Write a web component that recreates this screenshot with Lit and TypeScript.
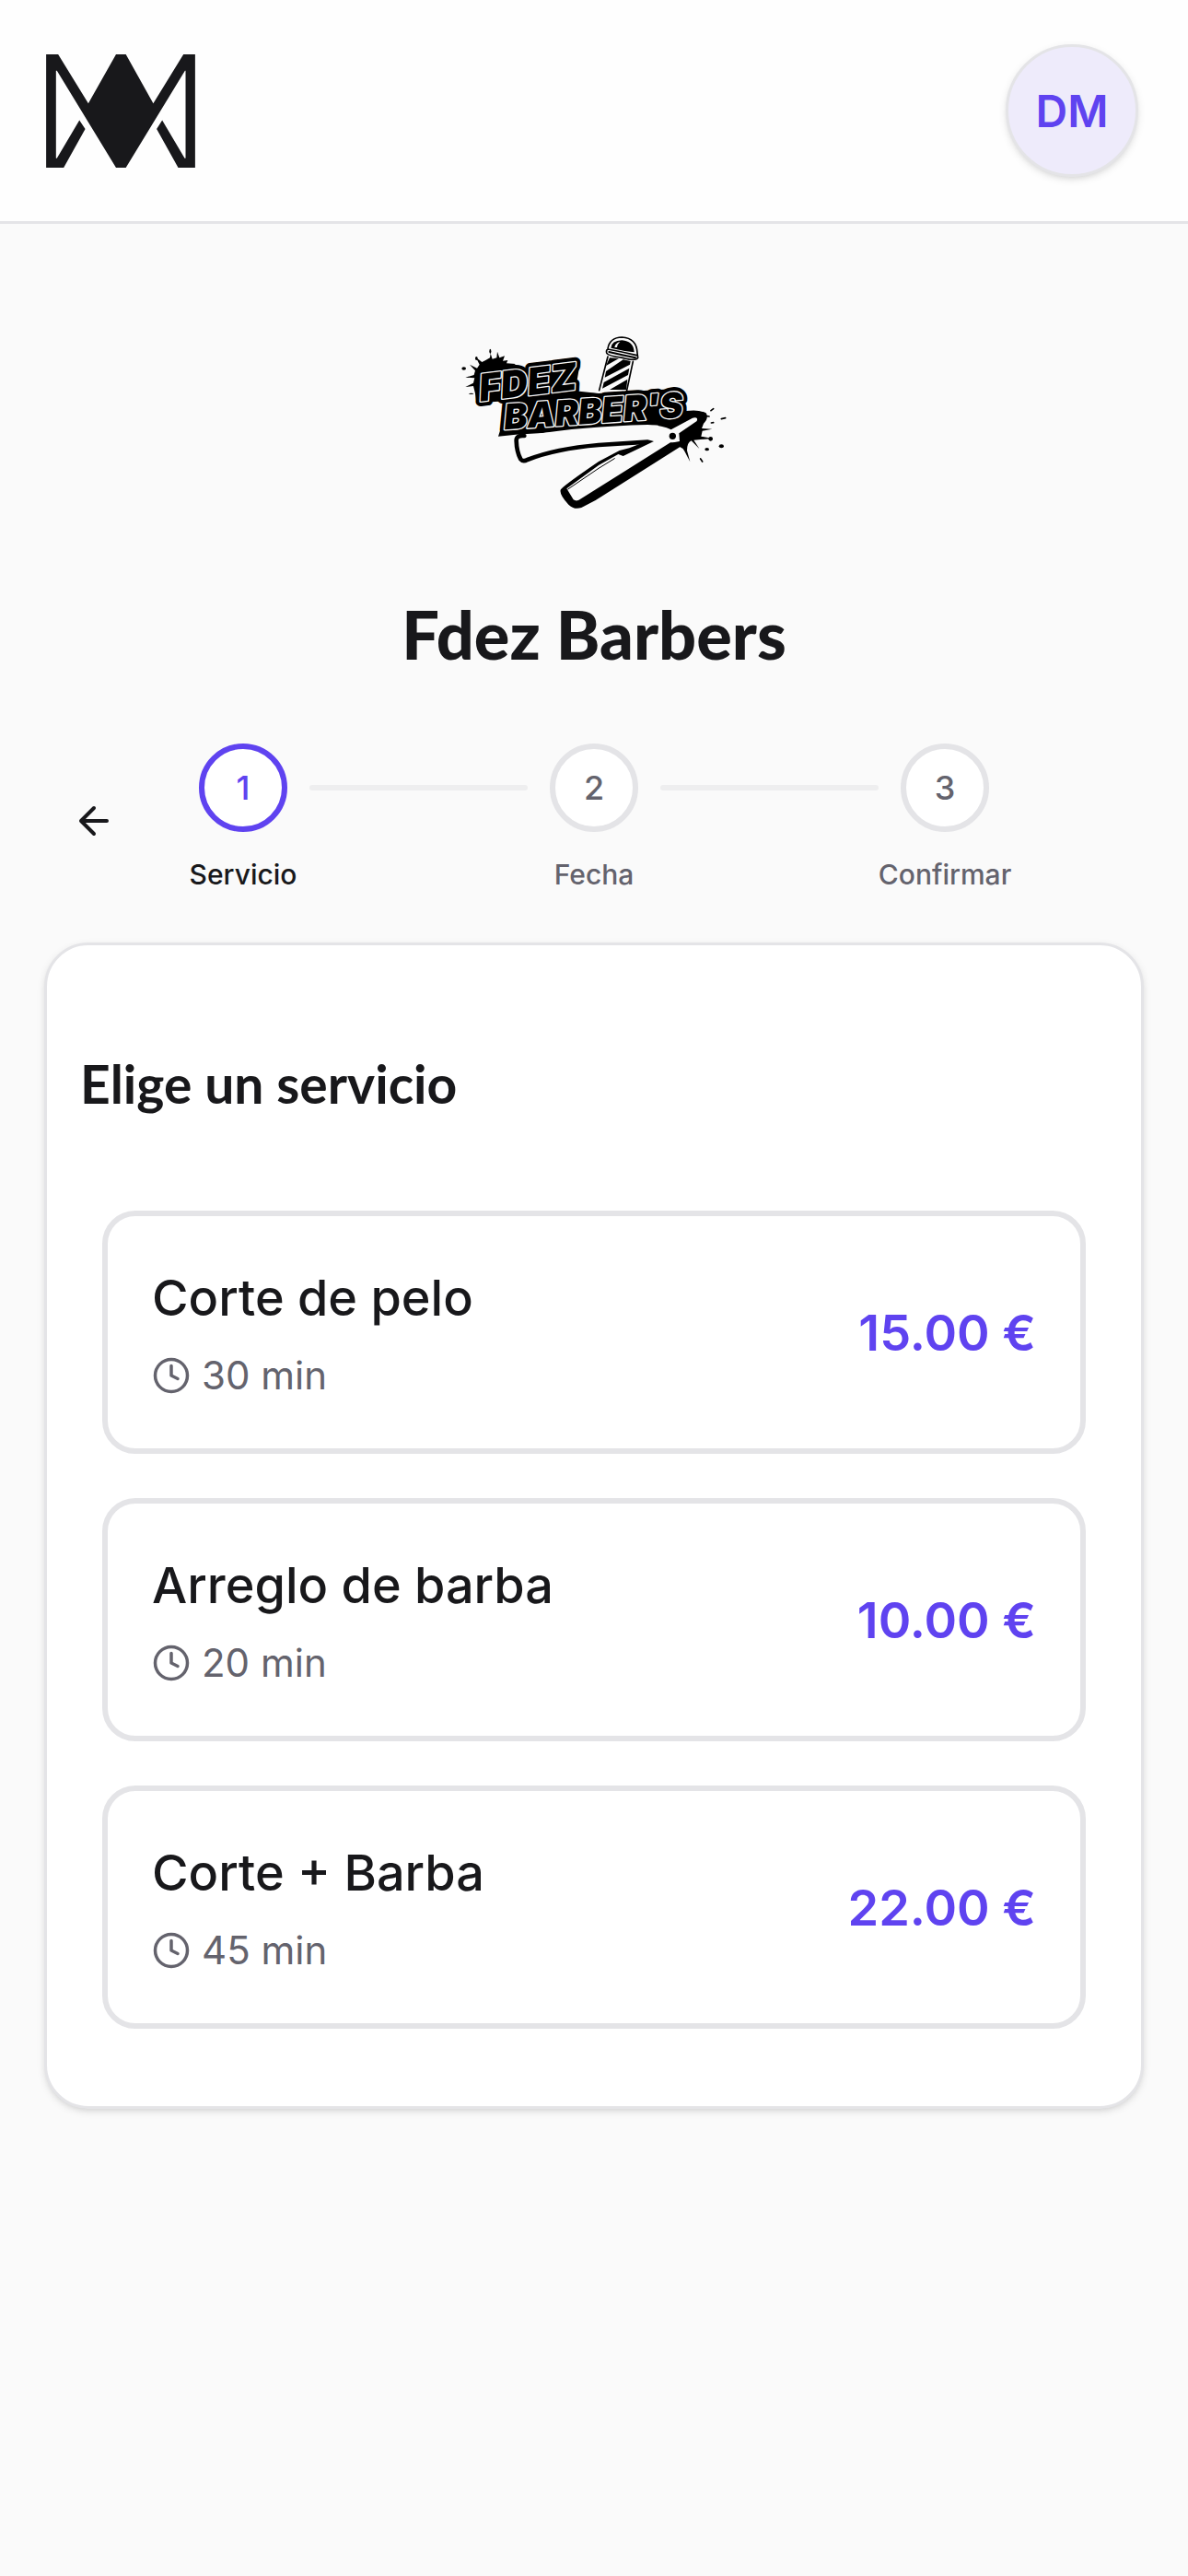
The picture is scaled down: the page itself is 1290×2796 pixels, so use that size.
import { LitElement, html, svg, css } from 'lit';
import { customElement, property, state } from 'lit/decorators.js';
import { classMap } from 'lit/directives/class-map.js';

interface Service {
  name: string;
  minutes: number;
  price: number;
}

const SERVICES: Service[] = [
  { name: 'Corte de pelo', minutes: 30, price: 15 },
  { name: 'Arreglo de barba', minutes: 20, price: 10 },
  { name: 'Corte + Barba', minutes: 45, price: 22 },
];

const STEPS = ['Servicio', 'Fecha', 'Confirmar'];

@customElement('brand-mark')
class BrandMark extends LitElement {
  static styles = css`
    :host {
      display: block;
    }

    .mark {
      display: block;
      width: 162px;
      height: 123px;
      fill: #18181b;
    }
  `;

  render() {
    return html`
      <svg class="mark" viewBox="62 55 484 368" aria-hidden="true">
        <path
          fill-rule="evenodd"
          d="M62 55H101L199 214L289 55H321L410 214L508 55H546V423H491L421 297L439 269L512 392H515V108H513L321 423H289L97 108H94V392H97L170 269L189 297L119 423H62Z"
        />
      </svg>
    `;
  }
}

@customElement('shop-logo')
class ShopLogo extends LitElement {
  static styles = css`
    :host {
      display: block;
    }

    .logo {
      display: block;
      width: 290px;
      height: 190px;
    }

    .line {
      fill: none;
      stroke: #000;
      stroke-linecap: round;
      stroke-linejoin: round;
    }

    .paper {
      fill: #fafafa;
    }

    .lettering {
      font-family: Inter, 'Liberation Sans', sans-serif;
      font-style: italic;
      font-weight: 900;
      stroke-linejoin: round;
    }

    .back {
      stroke: #000;
      stroke-width: 32px;
    }

    .front {
      fill: #000;
      stroke: #fafafa;
      stroke-width: 8px;
      paint-order: stroke;
    }
  `;

  private lettering(kind: string) {
    return svg`
      <g class="lettering ${kind}">
        <text x="95" y="258" font-size="122" transform="rotate(-7 95 258)">FDEZ</text>
        <text x="174" y="350" font-size="114" transform="rotate(-4 174 350)">BARBER'S</text>
      </g>
    `;
  }

  render() {
    return html`
      <svg class="logo" viewBox="30 40 870 570" role="img" aria-label="Fdez Barber's">
        <!-- ink splash, left -->
        <path
          d="M82 262L78 232L72 208L46 211L72 198L76 182L46 180L74 172L78 158L60 138L84 150L92 138L80 114L100 130L112 124L126 116L128 102L134 120L148 116L150 96L157 116L174 110L168 126L184 124L180 134L210 136L190 150L200 200Z"
        />
        <ellipse cx="41" cy="151" rx="7" ry="5" />
        <ellipse cx="127" cy="95" rx="3" ry="8" />
        <ellipse cx="65" cy="233" rx="8" ry="2" />
        <ellipse cx="82" cy="118" rx="4" ry="6" />

        <!-- barber pole -->
        <g transform="translate(450 0)">
          <path class="paper" d="M60 112L32 222H122L142 128Z" />
          <path class="line" stroke-width="5" d="M60 112L32 222M142 128L122 222" />
          <path
            d="M66 116L96 118L54 142ZM110 122L134 127L132 138L50 180L54 160ZM130 150L126 172L42 216L47 196ZM124 186L120 220H66Z"
          />
          <path class="paper" d="M56 86Q62 50 106 49Q154 52 158 92L160 110Q150 130 108 118Q60 112 54 102Z" />
          <path class="line" stroke-width="5" d="M60 86Q66 50 106 49Q154 52 156 100L158 116Q152 128 108 116Q60 110 56 100Q54 90 60 88Q104 96 154 108" />
          <path d="M70 84Q72 60 106 59Q144 62 146 98Q110 94 70 84Z" />
          <path class="line" stroke-width="6" d="M64 97Q110 108 150 116" />
          <path class="paper" d="M82 82Q84 68 100 64Q92 70 90 82Z" />
        </g>

        <!-- ink splash, right -->
        <g transform="translate(450 0)">
          <path
            d="M220 330L290 294Q350 280 380 296Q390 312 372 330L366 346L400 348L368 354L364 372L400 379L362 382L340 384L358 412L332 386Q318 392 318 418L328 455L310 420Q300 400 262 400Z"
          />
          <circle cx="395" cy="380" r="7" />
          <ellipse cx="383" cy="414" rx="7" ry="5" />
          <ellipse cx="430" cy="404" rx="8" ry="6" />
          <path class="line" stroke-width="5" d="M396 288L404 282M430 315L443 312M397 328L404 327M362 445L368 454M378 305L390 307" />
        </g>

        <!-- backing of the lettering -->
        <path d="M95 262L125 165L420 130L404 224L480 232L740 216L745 330L480 350L210 366L153 372L190 256Z" />
        ${this.lettering('back')}

        <!-- razor handle -->
        <path
          class="paper"
          d="M222 380Q232 370 270 366Q420 340 640 334Q690 336 716 350L786 312Q806 308 800 322L742 362L744 388L712 394L640 392Q400 398 242 452Q222 420 222 380Z"
        />
        <path class="line" stroke-width="14" d="M238 370Q211 368 212 386Q213 422 226 446Q234 456 248 448Q340 412 480 400L640 390" />
        <circle cx="721" cy="371" r="11" />

        <!-- razor blade -->
        <path class="paper" d="M640 392L712 394L742 380L450 574L405 600L366 548L480 462Z" />
        <path d="M714 392H768L470 580L424 604Q400 612 382 594Q352 562 356 546Q360 536 480 454L548 418L580 410L646 384L660 388L560 436L544 430L480 466L376 542L398 578Q410 586 424 574Z" />
        <path class="line" stroke-width="3" d="M380 544L480 476L532 444" />

        ${this.lettering('front')}
      </svg>
    `;
  }
}

@customElement('booking-steps')
class BookingSteps extends LitElement {
  static styles = css`
    :host {
      display: block;
    }

    .steps {
      display: flex;
      align-items: flex-start;
      gap: 24px;
      margin: 0;
      padding: 0 0 3px;
      list-style: none;
    }

    .step {
      display: flex;
      flex: none;
      flex-direction: column;
      align-items: center;
      gap: 24px;
      width: 96px;
      color: #64636d;
      font-weight: 500;
    }

    .circle {
      display: flex;
      align-items: center;
      justify-content: center;
      box-sizing: border-box;
      width: 96px;
      height: 96px;
      border: 6px solid #e4e4e7;
      border-radius: 50%;
      background: #fff;
      font-size: 36px;
    }

    .label {
      font-size: 30px;
      line-height: 45px;
      white-space: nowrap;
    }

    .current .circle {
      border-color: #5f43f0;
      color: #5f43f0;
    }

    .current .label {
      color: #18181b;
    }

    .connector {
      flex: 1;
      height: 6px;
      margin-top: 45px;
      border-radius: 3px;
      background: #eeeeef;
    }
  `;

  @property({ type: Number }) current = 0;

  render() {
    return html`
      <ol class="steps">
        ${STEPS.map(
          (label, i) => html`
            ${i > 0 ? html`<li class="connector" role="presentation"></li>` : ''}
            <li class=${classMap({ step: true, current: i === this.current })}>
              <span class="circle">${i + 1}</span>
              <span class="label">${label}</span>
            </li>
          `
        )}
      </ol>
    `;
  }
}

@customElement('service-option')
class ServiceOption extends LitElement {
  static styles = css`
    :host {
      display: block;
    }

    .option {
      display: flex;
      align-items: center;
      justify-content: space-between;
      gap: 48px;
      box-sizing: border-box;
      width: 100%;
      padding: 48px;
      border: 6px solid #e4e4e7;
      border-radius: 36px;
      background: #fff;
      color: #18181b;
      font: inherit;
      text-align: left;
      cursor: pointer;
    }

    .info {
      display: flex;
      flex-direction: column;
      gap: 12px;
    }

    .name {
      font-size: 54px;
      font-weight: 500;
      line-height: 81px;
    }

    .duration {
      display: flex;
      align-items: center;
      gap: 12px;
      color: #64636d;
      font-size: 42px;
      line-height: 63px;
    }

    .clock {
      width: 42px;
      height: 42px;
      fill: none;
      stroke: currentColor;
      stroke-width: 2px;
      stroke-linecap: round;
      stroke-linejoin: round;
    }

    .price {
      color: #5f43f0;
      font-size: 54px;
      font-weight: 600;
      white-space: nowrap;
    }
  `;

  @property({ attribute: false }) service!: Service;

  render() {
    const { name, minutes, price } = this.service;
    return html`
      <button class="option" type="button">
        <span class="info">
          <span class="name">${name}</span>
          <span class="duration">
            <svg class="clock" viewBox="0 0 24 24" aria-hidden="true">
              <circle cx="12" cy="12" r="10" />
              <path d="M12 6v6l4 2" />
            </svg>
            ${minutes} min
          </span>
        </span>
        <span class="price">${price.toFixed(2)} €</span>
      </button>
    `;
  }
}

@customElement('app-root')
class AppRoot extends LitElement {
  static styles = css`
    :host {
      display: block;
      min-height: 100vh;
      background: #fafafa;
      color: #18181b;
      font-family: Inter, 'Liberation Sans', sans-serif;
    }

    .header {
      display: flex;
      align-items: center;
      justify-content: space-between;
      padding: 48px 54px 48px 50px;
      border-bottom: 3px solid #e4e4e7;
      background: #fefefe;
    }

    .avatar {
      box-sizing: border-box;
      width: 144px;
      height: 144px;
      padding: 0;
      border: 3px solid #e4e4e7;
      border-radius: 50%;
      background: #eeebfb;
      box-shadow: 0 3px 9px rgba(0, 0, 0, 0.1), 0 3px 6px -3px rgba(0, 0, 0, 0.1);
      color: #5f43f0;
      font: inherit;
      font-size: 48px;
      font-weight: 600;
      cursor: pointer;
    }

    .content {
      padding: 120px 48px;
    }

    .shop {
      display: flex;
      flex-direction: column;
      align-items: center;
      gap: 90px;
    }

    .title,
    .subtitle {
      margin: 0;
      font-family: Lato, 'Liberation Sans', sans-serif;
    }

    .title {
      font-size: 72px;
      font-weight: 900;
      line-height: 90px;
    }

    .progress {
      display: flex;
      align-items: center;
      gap: 60px;
      margin: 74px 0 48px;
      padding-right: 168px;
    }

    .back {
      display: flex;
      align-items: center;
      justify-content: center;
      flex: none;
      width: 108px;
      height: 108px;
      padding: 0;
      border: 0;
      background: none;
      color: inherit;
      cursor: pointer;
    }

    .arrow {
      width: 48px;
      height: 48px;
      fill: none;
      stroke: currentColor;
      stroke-width: 2px;
      stroke-linecap: round;
      stroke-linejoin: round;
    }

    .steps {
      flex: 1;
    }

    .card {
      padding: 108px 60px 84px;
      border: 3px solid #e4e4e7;
      border-radius: 48px;
      background: #fff;
      box-shadow: 0 3px 9px rgba(0, 0, 0, 0.1), 0 3px 6px -3px rgba(0, 0, 0, 0.1);
    }

    .subtitle {
      margin: 0 -24px 96px;
      font-size: 57px;
      font-weight: 700;
      line-height: 84px;
    }

    .services {
      display: flex;
      flex-direction: column;
      gap: 48px;
    }
  `;

  @state() private step = 0;

  render() {
    return html`
      <header class="header">
        <brand-mark></brand-mark>
        <button class="avatar" type="button">DM</button>
      </header>
      <main class="content">
        <div class="shop">
          <shop-logo></shop-logo>
          <h1 class="title">Fdez Barbers</h1>
        </div>
        <div class="progress">
          <button class="back" type="button" aria-label="Volver">
            <svg class="arrow" viewBox="0 0 24 24" aria-hidden="true">
              <path d="m12 19-7-7 7-7M19 12H5" />
            </svg>
          </button>
          <booking-steps class="steps" .current=${this.step}></booking-steps>
        </div>
        <section class="card">
          <h2 class="subtitle">Elige un servicio</h2>
          <div class="services">
            ${SERVICES.map((s) => html`<service-option .service=${s}></service-option>`)}
          </div>
        </section>
      </main>
    `;
  }
}
